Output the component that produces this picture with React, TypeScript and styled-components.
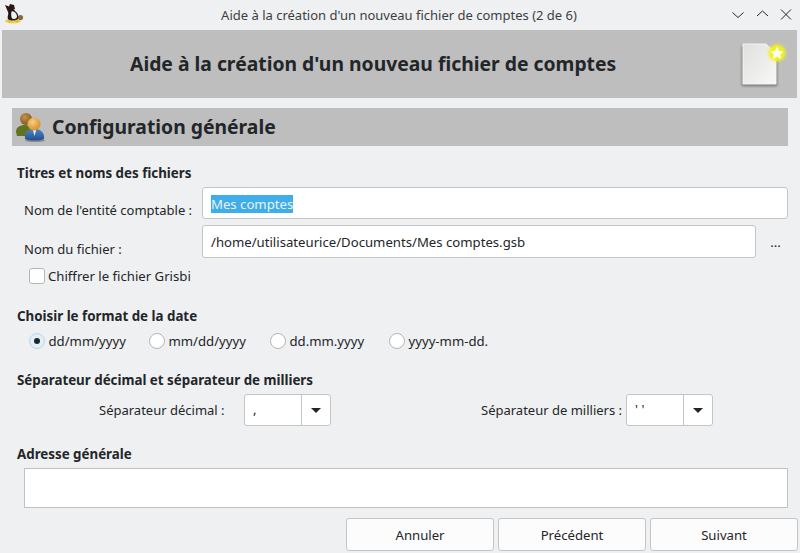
import styled, { createGlobalStyle } from "styled-components";

const GlobalStyle = createGlobalStyle`
html, body {
  margin: 0;
  padding: 0;
  background: #eff0f1;
}
`;

const Window = styled.div`
display: flex;
flex-direction: column;
width: 800px;
height: 553px;
overflow: hidden;
background: #eff0f1;
color: #232629;
font-family: "Noto Sans", sans-serif;
font-size: 13.17px;
line-height: 18px;
`;

const TitleBar = styled.div`
display: grid;
grid-template-columns: 1fr auto 1fr;
align-items: center;
height: 30px;
padding: 0 6px 0 4px;
flex-shrink: 0;
`;

const TitleText = styled.div`
font-size: 13px;
text-align: center;
color: #3b3f42;
`;

const WindowButtons = styled.div`
display: flex;
justify-content: flex-end;
gap: 8px;
`;

const Banner = styled.div`
display: flex;
align-items: center;
height: 68px;
margin: 0 3px 0 2px;
padding: 0 10px 0 128px;
flex-shrink: 0;
background: #bebebe;
`;

const BannerTitle = styled.div`
flex: 1;
font-size: 19.33px;
font-weight: 700;
line-height: 24px;
`;

const Content = styled.div`
display: flex;
flex-direction: column;
padding: 10px 12px 0;
`;

const SectionBanner = styled.div`
display: flex;
align-items: center;
gap: 3px;
height: 38px;
padding-left: 3px;
background: #bebebe;
font-size: 19.33px;
font-weight: 700;
`;

const GroupTitle = styled.div<{ $top: number }>`
margin: ${({ $top }) => $top}px 0 0 5px;
font-size: 13.33px;
font-weight: 700;
`;

const FieldRow = styled.div<{ $top: number }>`
display: flex;
align-items: flex-start;
margin-top: ${({ $top }) => $top}px;
padding-left: 12px;
`;

const FieldLabel = styled.div<{ $drop: number }>`
width: 178px;
margin-top: ${({ $drop }) => $drop}px;
font-size: 13px;
`;

const TextBox = styled.div<{ $height: number }>`
flex: 1;
display: flex;
align-items: center;
height: ${({ $height }) => $height}px;
padding: 1px 8px 0;
box-sizing: border-box;
border: 1px solid #c3c5c6;
border-radius: 3px;
background: #fff;
`;

const Selected = styled.span`
background: #3daee9;
color: #eff0f1;
`;

const Ellipsis = styled.div`
align-self: center;
width: 32px;
padding: 0 0 0 7px;
box-sizing: border-box;
text-align: center;
`;

const CheckRow = styled.label`
display: flex;
align-items: center;
gap: 3px;
margin: 9px 0 0 17px;
`;

const CheckBox = styled.span`
width: 14px;
height: 14px;
border: 1px solid #b4b6b7;
border-radius: 3px;
background: #fff;
`;

const RadioRow = styled.div`
display: flex;
margin: 7px 0 0 17px;
`;

const RadioItem = styled.label<{ $width: number }>`
display: flex;
align-items: center;
gap: 3.5px;
width: ${({ $width }) => $width}px;
`;

const RadioMark = styled.span<{ $on?: boolean }>`
display: flex;
align-items: center;
justify-content: center;
width: 14px;
height: 14px;
border: 1px solid ${({ $on }) => ($on ? "#b9d6e8" : "#b4b6b7")};
border-radius: 50%;
background: ${({ $on }) => ($on ? "#e1eff7" : "#fff")};
&::after {
  content: "";
  width: 6px;
  height: 6px;
  border-radius: 50%;
  background: ${({ $on }) => ($on ? "#232629" : "transparent")};
}
`;

const SeparatorRow = styled.div`
display: flex;
align-items: center;
margin-top: 5px;
padding-left: 87px;
`;

const SeparatorLabel = styled.div<{ $width: number }>`
width: ${({ $width }) => $width}px;
font-size: 13px;
`;

const Combo = styled.div<{ $after?: number }>`
display: flex;
width: 87px;
height: 32px;
box-sizing: border-box;
margin-right: ${({ $after }) => $after ?? 0}px;
border: 1px solid #c3c5c6;
border-radius: 3px;
background: #fff;
`;

const ComboValue = styled.div`
flex: 1;
padding: 5px 0 0 8px;
border-right: 1px solid #c3c5c6;
`;

const ComboArrow = styled.div`
display: flex;
align-items: center;
justify-content: center;
width: 28px;
&::after {
  content: "";
  border-left: 5px solid transparent;
  border-right: 5px solid transparent;
  border-top: 5px solid #232629;
}
`;

const AddressBox = styled.div`
height: 40px;
margin: 5px 0 0 12px;
box-sizing: border-box;
border: 1px solid #bfc1c2;
background: #fff;
`;

const ButtonRow = styled.div`
display: flex;
justify-content: flex-end;
gap: 4px;
margin: 10px -10px 0 0;
`;

const ActionButton = styled.button`
width: 148px;
height: 33px;
border: 1px solid #c3c5c6;
border-radius: 3px;
background: #fcfcfc;
color: #232629;
font: inherit;
`;

const WindowGlyph = ({ d }: { d: string }) => (
  <svg width="16" height="16" viewBox="0 0 16 16" fill="none" stroke="#232629" strokeWidth="1">
    <path d={d} />
  </svg>
);

const TuxIcon = () => (
  <svg width="24" height="24" viewBox="0 0 24 24">
    <ellipse cx="9" cy="18" rx="8" ry="2.6" fill="#ecd06a" />
    <ellipse cx="16.5" cy="14.5" rx="2.6" ry="2.6" fill="#8a6a3a" />
    <path d="M4 9 C6 6 10 6 11 8 C14 10 15 13 14 16 C11 18 6 18 4 16 C3 13 5 12 4 9 Z" fill="#1d1a1a" />
    <path d="M7.5 8.5 C10 7.5 13 11 13 13.5 C13 16 9.5 16.5 8 15.5 C7 13 7 11 7.5 8.5 Z" fill="#f2f2ee" />
    <path d="M1 2 L5 3.5 L6 1 L10 2 L11 6 L4 9 Z" fill="#2f1515" />
    <path d="M3 17 L9 18 L5 20 Z M10 18 L15 16 L14 20 Z" fill="#eeb92c" />
  </svg>
);

const UsersIcon = () => (
  <svg width="34" height="32" viewBox="0 0 34 32">
    <defs>
      <radialGradient id="headBrown" cx="40%" cy="35%" r="70%">
        <stop offset="0" stopColor="#c8924a" />
        <stop offset="1" stopColor="#7a5520" />
      </radialGradient>
      <radialGradient id="headOrange" cx="40%" cy="35%" r="70%">
        <stop offset="0" stopColor="#f8cf84" />
        <stop offset="1" stopColor="#d58a24" />
      </radialGradient>
      <linearGradient id="suitBlue" x1="0" y1="0" x2="0" y2="1">
        <stop offset="0" stopColor="#4f86c6" />
        <stop offset="1" stopColor="#234f8f" />
      </linearGradient>
    </defs>
    <path d="M1 21 C1 16 5 14 10 14 C15 14 17 17 17 21 L16 25 L2 25 Z" fill="#5f7420" />
    <circle cx="11" cy="8" r="6" fill="url(#headBrown)" />
    <ellipse cx="20" cy="29.5" rx="10" ry="1.6" fill="#8d8d8d" />
    <path d="M10 28 C9 21 14 18 19.5 18 C25 18 30 21 29 28 C25 30 14 30 10 28 Z" fill="url(#suitBlue)" />
    <path d="M17.5 18 L21.5 18 L19.5 25 Z" fill="#e8eef5" />
    <circle cx="19" cy="13" r="6.5" fill="url(#headOrange)" />
  </svg>
);

const NewFileIcon = () => (
  <svg width="48" height="48" viewBox="0 0 48 48">
    <defs>
      <linearGradient id="page" x1="0" y1="0" x2="1" y2="1">
        <stop offset="0" stopColor="#dfe1df" />
        <stop offset="1" stopColor="#f8f8f6" />
      </linearGradient>
      <filter id="soft" x="-40%" y="-40%" width="180%" height="180%">
        <feGaussianBlur stdDeviation="1.4" />
      </filter>
    </defs>
    <path d="M3 6 H27 L38 15 V46 H3 Z" fill="#6f6f6d" filter="url(#soft)" />
    <path d="M4 4 H27 L37 13 V44 H4 Z" fill="url(#page)" stroke="#f4f4f2" />
    <circle cx="38" cy="13" r="8.5" fill="#f2f21c" filter="url(#soft)" />
    <path d="M38 6.5 L40 11 L44.5 11.5 L41.2 14.5 L42.2 19 L38 16.6 L33.8 19 L34.8 14.5 L31.5 11.5 L36 11 Z" fill="#fffef0" />
  </svg>
);

const dateFormats = [
  { label: "dd/mm/yyyy", width: 120, on: true },
  { label: "mm/dd/yyyy", width: 121 },
  { label: "dd.mm.yyyy", width: 119 },
  { label: "yyyy-mm-dd.", width: 110 },
];

const App = () => {
  return (
    <Window>
      <GlobalStyle />
      <TitleBar>
        <TuxIcon />
        <TitleText>Aide à la création d'un nouveau fichier de comptes (2 de 6)</TitleText>
        <WindowButtons>
          <WindowGlyph d="M2.5 5.5 L8 10.5 L13.5 5.5" />
          <WindowGlyph d="M3 9 L8.5 4 L14 9" />
          <WindowGlyph d="M3 2.5 L13 12.5 M13 2.5 L3 12.5" />
        </WindowButtons>
      </TitleBar>
      <Banner>
        <BannerTitle>Aide à la création d'un nouveau fichier de comptes</BannerTitle>
        <NewFileIcon />
      </Banner>
      <Content>
        <SectionBanner>
          <UsersIcon />
          Configuration générale
        </SectionBanner>

        <GroupTitle $top={18}>Titres et noms des fichiers</GroupTitle>
        <FieldRow $top={5}>
          <FieldLabel $drop={14}>Nom de l'entité comptable :</FieldLabel>
          <TextBox $height={32}>
            <Selected>Mes comptes</Selected>
          </TextBox>
        </FieldRow>
        <FieldRow $top={6}>
          <FieldLabel $drop={15}>Nom du fichier :</FieldLabel>
          <TextBox $height={33}>/home/utilisateurice/Documents/Mes comptes.gsb</TextBox>
          <Ellipsis>...</Ellipsis>
        </FieldRow>
        <CheckRow>
          <CheckBox />
          Chiffrer le fichier Grisbi
        </CheckRow>

        <GroupTitle $top={22}>Choisir le format de la date</GroupTitle>
        <RadioRow>
          {dateFormats.map((format) => (
            <RadioItem key={format.label} $width={format.width}>
              <RadioMark $on={format.on} />
              {format.label}
            </RadioItem>
          ))}
        </RadioRow>

        <GroupTitle $top={21}>Séparateur décimal et séparateur de milliers</GroupTitle>
        <SeparatorRow>
          <SeparatorLabel $width={145}>Séparateur décimal :</SeparatorLabel>
          <Combo $after={150}>
            <ComboValue>,</ComboValue>
            <ComboArrow />
          </Combo>
          <SeparatorLabel $width={145}>Séparateur de milliers :</SeparatorLabel>
          <Combo>
            <ComboValue>' '</ComboValue>
            <ComboArrow />
          </Combo>
        </SeparatorRow>

        <GroupTitle $top={19}>Adresse générale</GroupTitle>
        <AddressBox />
        <ButtonRow>
          <ActionButton>Annuler</ActionButton>
          <ActionButton>Précédent</ActionButton>
          <ActionButton>Suivant</ActionButton>
        </ButtonRow>
      </Content>
    </Window>
  );
};

export default App;
